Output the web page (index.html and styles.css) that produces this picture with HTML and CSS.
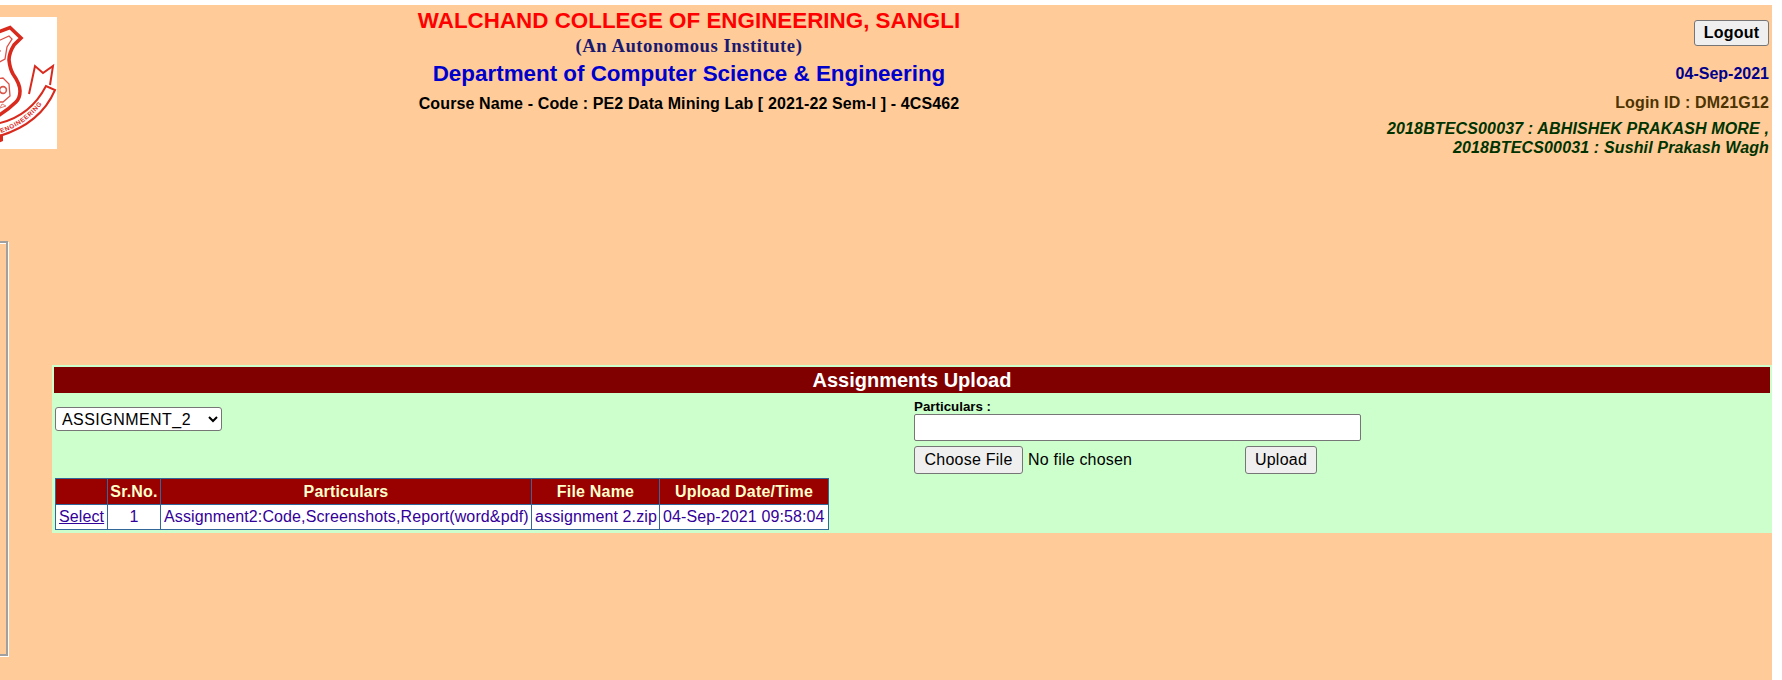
FILE: index.html
```html
<!DOCTYPE html>
<html lang="en">
<head>
<meta charset="utf-8">
<title>Assignments Upload</title>
<link rel="stylesheet" href="styles.css">
</head>
<body>
<div class="page">
  <div class="side-frame"></div>
  <header class="header">
    <div class="logo-col">
      <svg class="logo" viewBox="0 0 57 132" width="57" height="132" aria-label="College crest">
        <rect width="57" height="132" fill="#fff"/>
        <path d="M-4 16 L10 10.5 L21 21 L14 28 Q9 36 9 43 Q10 52 13 57 Q20 67 20 74 Q20 81 16 85 Q8 93 -4 100" fill="none" stroke="#d92a1e" stroke-width="3.6"/>
        <path d="M-4 25 L9 19 L12 22 L7 30 L5 42 L-4 47" fill="none" stroke="#dc5046" stroke-width="1.3"/>
        <path d="M-4 62 L3 61 L9 67 L10 79 L3 85 L-4 85" fill="#fff" stroke="#dc5046" stroke-width="1.3"/>
        <circle cx="3" cy="73" r="3.4" fill="none" stroke="#d9564a" stroke-width="1.6"/>
        <path d="M2 87 L6 89 L0 91 Z" fill="none" stroke="#e08078" stroke-width="1"/>
        <path d="M-2 30 L1 34 L-2 37 Z" fill="#d9564a"/>
        <path d="M29 77 L35 49 L43 56 L53 49 L50 68" fill="#fff" stroke="#d92a1e" stroke-width="2"/>
        <path d="M-4 107 Q30 100 46 69 L55 73 Q40 108 -4 120 Z" fill="#fff" stroke="#d92a1e" stroke-width="2"/>
        <path id="bandtext" d="M1 116 Q32 106 51 74" fill="none"/>
        <text class="crest-text"><textPath href="#bandtext">ENGINEERING</textPath></text>
        <path d="M-2 118 L3 117 L3 124 L-2 126 Z" fill="#d92a1e"/>
      </svg>
    </div>
    <div class="titles">
      <h1 class="college">WALCHAND COLLEGE OF ENGINEERING, SANGLI</h1>
      <p class="autonomous">(An Autonomous Institute)</p>
      <h2 class="department">Department of Computer Science &amp; Engineering</h2>
      <p class="course">Course Name - Code : PE2 Data Mining Lab [ 2021-22 Sem-I ] - 4CS462</p>
    </div>
    <div class="userinfo">
      <button class="logout" type="button">Logout</button>
      <p class="date">04-Sep-2021</p>
      <p class="login">Login ID : DM21G12</p>
      <p class="members">2018BTECS00037 : ABHISHEK PRAKASH MORE ,<br>2018BTECS00031 : Sushil Prakash Wagh</p>
    </div>
  </header>
  <section class="panel">
    <h3 class="panel-title">Assignments Upload</h3>
    <div class="form-row">
      <div class="select-col">
        <select class="assign-select">
          <option>ASSIGNMENT_2</option>
        </select>
      </div>
      <div class="upload-col">
        <label class="part-label">Particulars :</label>
        <input class="part-input" type="text">
        <div class="file-row">
          <button class="btn btn-file" type="button">Choose File</button>
          <span class="no-file">No file chosen</span>
          <button class="btn btn-upload" type="button">Upload</button>
        </div>
      </div>
    </div>
    <table class="grid">
      <thead>
        <tr>
          <th class="c-select"></th>
          <th class="c-sr">Sr.No.</th>
          <th class="c-part">Particulars</th>
          <th class="c-file">File Name</th>
          <th class="c-date">Upload Date/Time</th>
        </tr>
      </thead>
      <tbody>
        <tr>
          <td><a href="#">Select</a></td>
          <td class="center">1</td>
          <td>Assignment2:Code,Screenshots,Report(word&amp;pdf)</td>
          <td>assignment 2.zip</td>
          <td>04-Sep-2021 09:58:04</td>
        </tr>
      </tbody>
    </table>
  </section>
</div>
</body>
</html>
```
FILE: styles.css
```css
* { box-sizing: border-box; }
html, body { margin: 0; height: 100%; background: #fff; overflow: hidden; }
body { padding: 5px 10px 0 0; font-family: "Liberation Sans", Arial, sans-serif; font-size: 16px; }
.page { position: relative; height: 675px; background: #ffcc99; padding-top: 12px; }
.side-frame { position: absolute; left: -10px; top: 236px; width: 18px; height: 415px; border: 2px solid #a0a0a0; box-shadow: inset 0 1px #fff, 1px 1px 0 #fff; }
.header { display: grid; grid-template-columns: 57px 1fr 400px; height: 348px; }
.logo { display: block; }
.crest-text { font: bold 6.4px "Liberation Sans", Arial, sans-serif; fill: #d92a1e; letter-spacing: .6px; }
.titles { margin: -9px 0 0 332px; width: 600px; text-align: center; white-space: nowrap; }
.college { margin: 0; font-size: 22.4px; line-height: 26px; color: #ff0000; }
.autonomous { margin: 0; font: bold 18.67px/24px "Liberation Serif", "Times New Roman", serif; letter-spacing: .53px; color: #191970; }
.department { margin: 1px 0 0; font-size: 22.4px; line-height: 30px; color: #0000cd; }
.course { margin: 5px 0 0; font-weight: bold; font-size: 16px; line-height: 20px; letter-spacing: .12px; color: #000; }
.userinfo { text-align: right; padding-right: 3px; margin-top: 3px; font-weight: bold; }
.logout { display: inline-block; width: 75px; height: 26px; padding: 0; font: bold 16px "Liberation Sans", Arial, sans-serif; letter-spacing: .2px; color: #000; background: #efefef; border: 1px solid #767676; border-radius: 3px; }
.userinfo p { margin: 0; }
.userinfo .date { margin-top: 18px; line-height: 20px; color: #00008b; }
.userinfo .login { margin-top: 9px; line-height: 20px; color: #4d3300; letter-spacing: .15px; }
.userinfo .members { margin-top: 6px; line-height: 19px; font-style: italic; color: #003300; letter-spacing: .14px; }
.panel { margin: 0 0 0 52px; height: 168px; background: #ccffcc; padding: 2px 2px 0; }
.panel-title { margin: 0; height: 26px; line-height: 26px; background: #800000; color: #fff; font-size: 20px; text-align: center; }
.form-row { display: flex; height: 85px; }
.select-col { width: 860px; padding: 14px 0 0 1px; }
.assign-select { display: block; width: 167px; height: 24px; font: 16px "Liberation Sans", Arial, sans-serif; letter-spacing: .45px; background: #fff; color: #000; border: 1px solid #767676; border-radius: 3px; padding: 0 0 0 2px; }
.upload-col { display: flex; flex-direction: column; align-items: flex-start; }
.part-label { font-size: 13.33px; font-weight: bold; line-height: 15px; height: 15px; margin-top: 6px; color: #000; }
.part-input { display: block; width: 447px; height: 27px; margin: 0; background: #fff; border: 1px solid #767676; border-radius: 2px; }
.file-row { display: flex; align-items: center; margin-top: 5px; }
.btn { height: 28px; padding: 0; font: 16px "Liberation Sans", Arial, sans-serif; letter-spacing: .25px; color: #000; background: #efefef; border: 1px solid #767676; border-radius: 3px; }
.btn-file { width: 109px; }
.btn-upload { width: 72px; }
.no-file { margin-left: 5px; width: 217px; color: #000; letter-spacing: .2px; }
.grid { margin-left: 1px; width: 773px; table-layout: fixed; border-collapse: collapse; background: #fff; color: #330099; border: 1px solid #336699; }
.c-select { width: 52px; }
.c-sr { width: 53px; }
.c-part { width: 371px; }
.c-file { width: 128px; }
.c-date { width: 169px; }
.grid th { height: 26px; padding: 0; background: #990000; color: #ffffcc; font-size: 16px; font-weight: bold; letter-spacing: .2px; border: 1px solid #336699; }
.grid td { height: 25px; padding: 0 3px; font-size: 16px; letter-spacing: .12px; border: 1px solid #336699; white-space: nowrap; }
.grid td.center { text-align: center; }
.grid a { color: #330099; }
```
